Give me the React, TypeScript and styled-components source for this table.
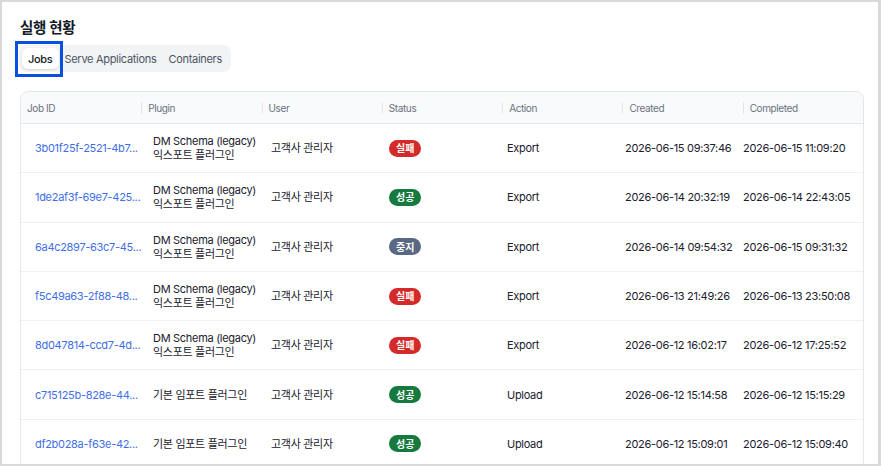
import React from 'react';
import styled, { createGlobalStyle } from 'styled-components';

const GlobalStyle = createGlobalStyle`
  html, body {
    margin: 0;
    padding: 0;
    background: #ffffff;
  }
  body {
    font-family: Inter, 'Noto Sans CJK KR', sans-serif;
    color: #1f2937;
  }
`;

type Status = 'fail' | 'success' | 'stopped';

type Job = {
  id: string;
  plugin: string[];
  user: string;
  status: Status;
  action: string;
  created: string;
  completed: string;
};

const statusLabel: Record<Status, string> = {
  fail: '실패',
  success: '성공',
  stopped: '중지',
};

const statusBg: Record<Status, string> = {
  fail: '#d42a2a',
  success: '#167a3e',
  stopped: '#5a6983',
};

const legacy = ['DM Schema (legacy)', '익스포트 플러그인'];
const basicImport = ['기본 임포트 플러그인'];

const jobs: Job[] = [
  { id: '3b01f25f-2521-4b7...', plugin: legacy, user: '고객사 관리자', status: 'fail', action: 'Export', created: '2026-06-15 09:37:46', completed: '2026-06-15 11:09:20' },
  { id: '1de2af3f-69e7-425...', plugin: legacy, user: '고객사 관리자', status: 'success', action: 'Export', created: '2026-06-14 20:32:19', completed: '2026-06-14 22:43:05' },
  { id: '6a4c2897-63c7-45...', plugin: legacy, user: '고객사 관리자', status: 'stopped', action: 'Export', created: '2026-06-14 09:54:32', completed: '2026-06-15 09:31:32' },
  { id: 'f5c49a63-2f88-48...', plugin: legacy, user: '고객사 관리자', status: 'fail', action: 'Export', created: '2026-06-13 21:49:26', completed: '2026-06-13 23:50:08' },
  { id: '8d047814-ccd7-4d...', plugin: legacy, user: '고객사 관리자', status: 'fail', action: 'Export', created: '2026-06-12 16:02:17', completed: '2026-06-12 17:25:52' },
  { id: 'c715125b-828e-44...', plugin: basicImport, user: '고객사 관리자', status: 'success', action: 'Upload', created: '2026-06-12 15:14:58', completed: '2026-06-12 15:15:29' },
  { id: 'df2b028a-f63e-42...', plugin: basicImport, user: '고객사 관리자', status: 'success', action: 'Upload', created: '2026-06-12 15:09:01', completed: '2026-06-12 15:09:40' },
];

const columns = ['Job ID', 'Plugin', 'User', 'Status', 'Action', 'Created', 'Completed'];
const tabs = ['Jobs', 'Serve Applications', 'Containers'];

const Frame = styled.div`
  width: 881px;
  height: 466px;
  box-sizing: border-box;
  border: 2px solid #d9d9d9;
  border-right-width: 3px;
  overflow: hidden;
  padding: 15px 14px 0 18px;
`;

const Title = styled.h2`
  margin: 0 0 6px;
  font-size: 14.5px;
  font-weight: 700;
  letter-spacing: -0.3px;
  color: #111827;
  line-height: 22px;
`;

const TabList = styled.div`
  display: inline-flex;
  align-items: center;
  padding: 3px;
  margin-left: -1px;
  background: #f2f3f5;
  border-radius: 8px;
`;

const Tab = styled.div<{ $active?: boolean }>`
  position: relative;
  padding: 0 6px;
  height: 21px;
  display: flex;
  align-items: center;
  border-radius: 6px;
  font-size: 11px;
  letter-spacing: -0.3px;
  color: ${({ $active }) => ($active ? '#111827' : '#4b5563')};
  font-weight: ${({ $active }) => ($active ? 500 : 400)};
  background: ${({ $active }) => ($active ? '#ffffff' : 'transparent')};
  box-shadow: ${({ $active }) => ($active ? '0 1px 2px rgba(0,0,0,0.12)' : 'none')};
`;

const Highlight = styled.span`
  position: absolute;
  left: -7px;
  top: -7px;
  right: -4px;
  bottom: -8px;
  border: 3px solid #0b4fe0;
  pointer-events: none;
`;

const Card = styled.div`
  margin-top: 19px;
  border: 1px solid #e3e6eb;
  border-radius: 8px;
  overflow: hidden;
`;

const HeaderRow = styled.div`
  display: grid;
  grid-template-columns: repeat(7, 1fr);
  height: 31px;
  align-items: center;
  background: #f9fafb;
  border-bottom: 1px solid #e5e8ec;
`;

const HeaderCell = styled.div<{ $first?: boolean }>`
  font-size: 10px;
  letter-spacing: -0.4px;
  color: #6b7280;
  padding-left: 6px;
  line-height: 12px;
  border-left: ${({ $first }) => ($first ? 'none' : '1px solid #e2e5ea')};
`;

const Row = styled.div`
  display: grid;
  grid-template-columns: repeat(7, 118px);
  padding-left: 14px;
  height: 48.3px;
  align-items: center;
  border-bottom: 1px solid #eef0f3;
`;

const Cell = styled.div`
  font-size: 11px;
  letter-spacing: -0.3px;
  line-height: 14px;
  color: #1a202c;
  white-space: nowrap;
`;

const IdLink = styled.a`
  color: #3f6fe6;
  text-decoration: none;
`;

const Badge = styled.span<{ $status: Status }>`
  display: inline-flex;
  align-items: center;
  height: 17px;
  padding: 0 7px;
  border-radius: 999px;
  font-size: 10px;
  font-weight: 700;
  letter-spacing: 0;
  color: #ffffff;
  background: ${({ $status }) => statusBg[$status]};
`;

const App: React.FC = () => (
  <>
    <GlobalStyle />
    <Frame>
      <Title>실행 현황</Title>
      <TabList>
        {tabs.map((t, i) => (
          <Tab key={t} $active={i === 0}>
            {t}
            {i === 0 && <Highlight />}
          </Tab>
        ))}
      </TabList>
      <Card>
        <HeaderRow>
          {columns.map((c, i) => (
            <HeaderCell key={c} $first={i === 0}>
              {c}
            </HeaderCell>
          ))}
        </HeaderRow>
        {jobs.map((job) => (
          <Row key={job.id}>
            <Cell>
              <IdLink href="#">{job.id}</IdLink>
            </Cell>
            <Cell>
              {job.plugin.map((line) => (
                <div key={line}>{line}</div>
              ))}
            </Cell>
            <Cell>{job.user}</Cell>
            <Cell>
              <Badge $status={job.status}>{statusLabel[job.status]}</Badge>
            </Cell>
            <Cell>{job.action}</Cell>
            <Cell>{job.created}</Cell>
            <Cell>{job.completed}</Cell>
          </Row>
        ))}
      </Card>
    </Frame>
  </>
);

export default App;
